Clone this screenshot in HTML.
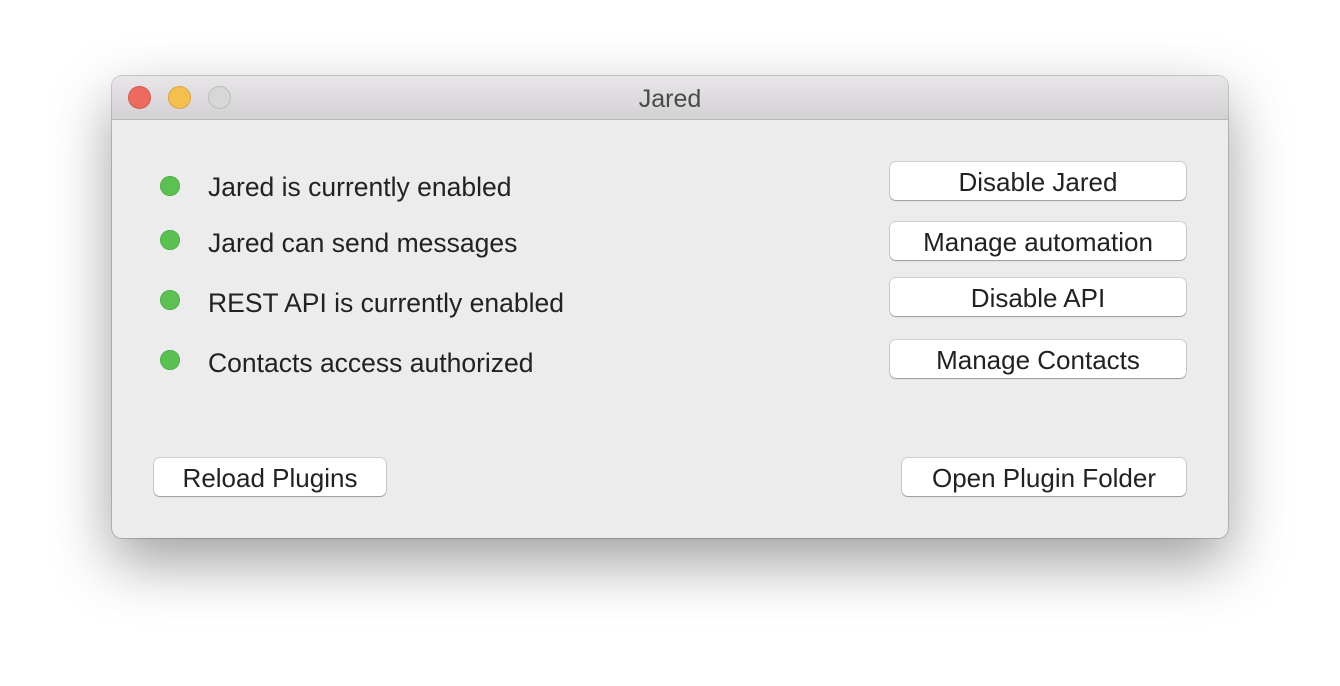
<!DOCTYPE html>
<html><head><style>
body{margin:0;width:1340px;height:686px;background:#fff;position:relative;overflow:hidden;font-family:"Liberation Sans",sans-serif;}
.win{position:absolute;left:112px;top:76px;width:1116px;height:462px;background:#ececec;border-radius:10px;box-shadow:0 24px 60px rgba(0,0,0,.38),0 0 0 1px rgba(0,0,0,.18);overflow:hidden}
.tb{height:43px;background:linear-gradient(#e8e6e8,#d3d1d3);border-bottom:1px solid #b9b9b9;text-align:center;line-height:47px;font-size:25px;color:#4a4a4a}
.tl{position:absolute;top:10px;width:23px;height:23px;border-radius:50%;box-sizing:border-box}
.dot{position:absolute;left:48px;width:20px;height:20px;border-radius:50%;background:#5cc152;border:1px solid #4fae47;box-sizing:border-box}
.lbl{position:absolute;left:96px;font-size:26.5px;color:#222;line-height:28px}
.btn{position:absolute;height:38px;background:#fff;border-radius:6px;box-shadow:0 0 0 1px rgba(0,0,0,.12),0 1px 1px rgba(0,0,0,.25);text-align:center;font-size:26px;line-height:40px;color:#222}
</style></head><body>
<div class="win">
<div class="tb">Jared</div>
<div class="tl" style="left:16px;background:#ec6a5f;border:1px solid #d6584d"></div>
<div class="tl" style="left:56px;background:#f5bf4f;border:1px solid #d9a43d"></div>
<div class="tl" style="left:96px;background:#d8d6d8;border:1px solid #bcbcbc"></div>
<div class="dot" style="top:100px"></div><div class="lbl" style="top:97px">Jared is currently enabled</div>
<div class="dot" style="top:154px"></div><div class="lbl" style="top:153px">Jared can send messages</div>
<div class="dot" style="top:214px"></div><div class="lbl" style="top:213px">REST API is currently enabled</div>
<div class="dot" style="top:274px"></div><div class="lbl" style="top:273px">Contacts access authorized</div>
<div class="btn" style="left:778px;top:86px;width:296px">Disable Jared</div>
<div class="btn" style="left:778px;top:146px;width:296px">Manage automation</div>
<div class="btn" style="left:778px;top:202px;width:296px">Disable API</div>
<div class="btn" style="left:778px;top:264px;width:296px">Manage Contacts</div>
<div class="btn" style="left:42px;top:382px;width:232px">Reload Plugins</div>
<div class="btn" style="left:790px;top:382px;width:284px">Open Plugin Folder</div>
</div>
</body></html>
